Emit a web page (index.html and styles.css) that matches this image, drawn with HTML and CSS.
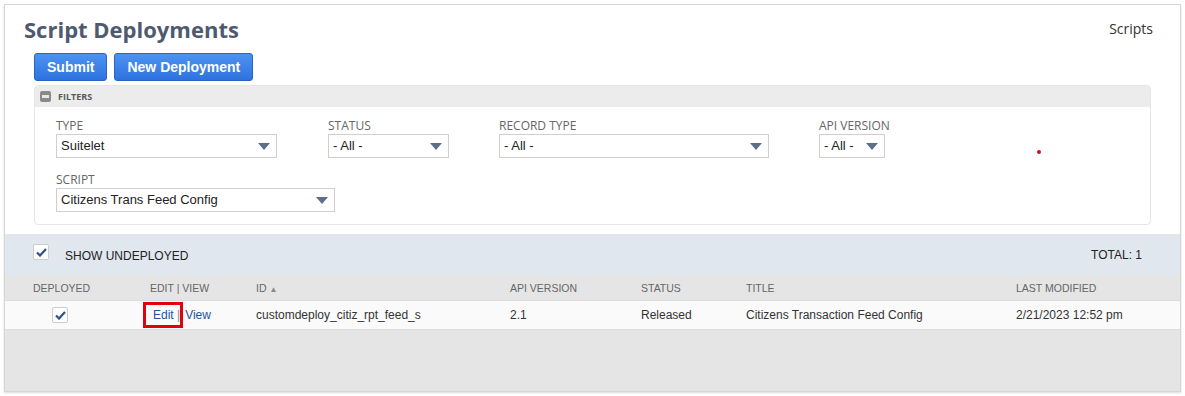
FILE: index.html
```html
<!DOCTYPE html>
<html lang="en">
<head>
    <meta charset="UTF-8">
    <title>Script Deployments</title>
    <link rel="stylesheet" href="styles.css">
</head>
<body>

<div class="frame">
    <!-- Title bar -->
    <div class="page-head">
        <h1>Script Deployments</h1>
        <span class="crumb">Scripts</span>
    </div>

    <div class="buttons">
        <button class="btn">Submit</button>
        <button class="btn">New Deployment</button>
    </div>

    <!-- Filters -->
    <div class="filters">
        <div class="filters-head">
            <span class="collapse"></span>
            <span>FILTERS</span>
        </div>
        <div class="filters-body">
            <div class="filter-row">
                <div class="field f-type">
                    <label>TYPE</label>
                    <div class="select">Suitelet<span class="arrow"></span></div>
                </div>
                <div class="field f-status">
                    <label>STATUS</label>
                    <div class="select">- All -<span class="arrow"></span></div>
                </div>
                <div class="field f-record">
                    <label>RECORD TYPE</label>
                    <div class="select">- All -<span class="arrow"></span></div>
                </div>
                <div class="field f-api">
                    <label>API VERSION</label>
                    <div class="select">- All -<span class="arrow"></span></div>
                </div>
                <span class="dot"></span>
            </div>
            <div class="filter-row">
                <div class="field f-script">
                    <label>SCRIPT</label>
                    <div class="select">Citizens Trans Feed Config<span class="arrow"></span></div>
                </div>
            </div>
        </div>
    </div>

    <!-- List -->
    <div class="band">
        <div class="band-left">
            <span class="check"><svg width="11" height="9" viewBox="0 0 11 9"><path d="M1 4.5 L4 7.5 L10 1" fill="none" stroke="#2c4f8a" stroke-width="2.2"/></svg></span>
            <span class="band-label">SHOW UNDEPLOYED</span>
        </div>
        <span>TOTAL: 1</span>
    </div>

    <table class="list">
        <thead>
            <tr>
                <th class="c-dep">DEPLOYED</th>
                <th class="c-edit">EDIT | VIEW</th>
                <th class="c-id">ID <span class="sort">&#9650;</span></th>
                <th class="c-api">API VERSION</th>
                <th class="c-status">STATUS</th>
                <th class="c-title">TITLE</th>
                <th>LAST MODIFIED</th>
            </tr>
        </thead>
        <tbody>
            <tr>
                <td class="c-dep"><span class="check"><svg width="11" height="9" viewBox="0 0 11 9"><path d="M1 4.5 L4 7.5 L10 1" fill="none" stroke="#2c4f8a" stroke-width="2.2"/></svg></span></td>
                <td class="c-edit"><span class="mark"><a href="#">Edit</a> <span class="sep">|</span></span><a class="view" href="#">View</a></td>
                <td>customdeploy_citiz_rpt_feed_s</td>
                <td>2.1</td>
                <td>Released</td>
                <td>Citizens Transaction Feed Config</td>
                <td>2/21/2023 12:52 pm</td>
            </tr>
        </tbody>
    </table>

    <div class="rest"></div>
</div>

</body>
</html>
```

FILE: styles.css
```css
html, body {
    margin: 0;
    height: 100%;
    background-color: #fff;
}

body {
    font-family: "Liberation Sans", Arial, sans-serif;
    color: #222;
}

.frame {
    margin: 4px;
    height: 386px;
    border: 1px solid #d6d6d6;
    box-shadow: 0 1px 2px rgba(0, 0, 0, 0.15);
    display: flex;
    flex-direction: column;
    background-color: #fff;
}

/* title */
.page-head {
    display: flex;
    justify-content: space-between;
    align-items: flex-start;
    padding: 9px 27px 0 19px;
}

.page-head h1 {
    margin: 0;
    font-family: "Open Sans", sans-serif;
    font-weight: 700;
    font-size: 22px;
    line-height: 30px;
    color: #4d5a6f;
}

.crumb {
    font-family: "Open Sans", sans-serif;
    font-size: 14px;
    color: #333;
    margin-top: 5px;
}

.buttons {
    display: flex;
    gap: 7px;
    padding: 9px 0 0 29px;
}

.btn {
    height: 28px;
    padding: 0 12px;
    border: 1px solid #2b63c4;
    border-radius: 3px;
    background: linear-gradient(#4c93f2, #2f72df);
    color: #fff;
    font-family: "Liberation Sans", Arial, sans-serif;
    font-weight: 700;
    font-size: 14px;
}

/* filters */
.filters {
    margin: 4px 29px 0 29px;
    border: 1px solid #e6e6e6;
    border-radius: 4px;
}

.filters-head {
    display: flex;
    align-items: center;
    gap: 7px;
    height: 21px;
    padding-left: 5px;
    background-color: #ececec;
    font-family: "Open Sans", sans-serif;
    font-weight: 700;
    font-size: 9px;
    color: #5a5a5a;
}

.collapse {
    width: 11px;
    height: 11px;
    border-radius: 2px;
    background-color: #8a8a8a;
    position: relative;
}

.collapse::after {
    content: "";
    position: absolute;
    left: 2px;
    right: 2px;
    top: 4px;
    height: 3px;
    background-color: #e8e8e8;
}

.filters-body {
    padding: 12px 0 12px 21px;
}

.filter-row {
    display: flex;
    align-items: flex-start;
    margin-bottom: 15px;
}

.filter-row:last-child {
    margin-bottom: 0;
}

.field label {
    display: block;
    white-space: nowrap;
    font-family: "Open Sans", sans-serif;
    font-size: 12px;
    color: #666;
    line-height: 14px;
    margin-bottom: 1px;
}

.select {
    position: relative;
    height: 22px;
    line-height: 22px;
    border: 1px solid #cfcfcf;
    padding-left: 4px;
    font-size: 13px;
    color: #222;
}

.arrow {
    position: absolute;
    right: 6px;
    top: 8px;
    width: 0;
    height: 0;
    border-left: 6px solid transparent;
    border-right: 6px solid transparent;
    border-top: 7px solid #5d6f8c;
}

.f-type { width: 221px; margin-right: 51px; }
.f-status { width: 121px; margin-right: 50px; }
.f-record { width: 270px; margin-right: 50px; }
.f-api { width: 66px; }
.f-script { width: 279px; }

.dot {
    width: 4px;
    height: 4px;
    border-radius: 50%;
    background-color: #d01020;
    margin: 31px 0 0 152px;
}

/* list */
.band {
    margin-top: 9px;
    height: 41px;
    background-color: #e1e7ef;
    display: flex;
    align-items: center;
    justify-content: space-between;
    padding: 0 38px 0 28px;
    font-size: 12px;
    color: #222;
}

.band-left {
    display: flex;
    align-items: center;
    gap: 16px;
}

.band-left .check {
    margin-top: -5px;
}

.band-label {
    margin-top: 3px;
}

.check {
    display: inline-flex;
    align-items: center;
    justify-content: center;
    width: 14px;
    height: 14px;
    border: 1px solid #cdcdcd;
    border-radius: 2px;
    background-color: #fff;
}

.list {
    width: 100%;
    table-layout: fixed;
    border-collapse: collapse;
    font-size: 12px;
}

.list th {
    height: 25px;
    background-color: #e5e5e5;
    text-align: left;
    font-weight: 400;
    font-size: 10.5px;
    color: #666;
    padding: 0;
    border-bottom: 1px solid #dcdcdc;
}

.list td {
    height: 28px;
    padding: 0;
    background-color: #fafafa;
    border-bottom: 1px solid #dcdcdc;
    color: #333;
}

.list th:first-child {
    padding-left: 28px;
}

.c-dep { width: 145px; }
.c-edit { width: 106px; }
.c-id { width: 254px; }
.c-api { width: 131px; }
.c-status { width: 105px; }
.c-title { width: 270px; }

th.c-dep { width: 117px; }

td.c-dep {
    padding-left: 47px;
}

.sort {
    font-size: 8px;
    color: #888;
}

.list a {
    color: #255599;
    text-decoration: none;
}

.mark {
    display: inline-block;
    border: 3px solid #e0000f;
    padding: 2px 0 2px 7px;
    margin-left: -7px;
    line-height: 16px;
}

.sep {
    color: #888;
}

.view {
    margin-left: 2px;
}

.rest {
    flex: 1;
    background-color: #e5e5e5;
}
```
